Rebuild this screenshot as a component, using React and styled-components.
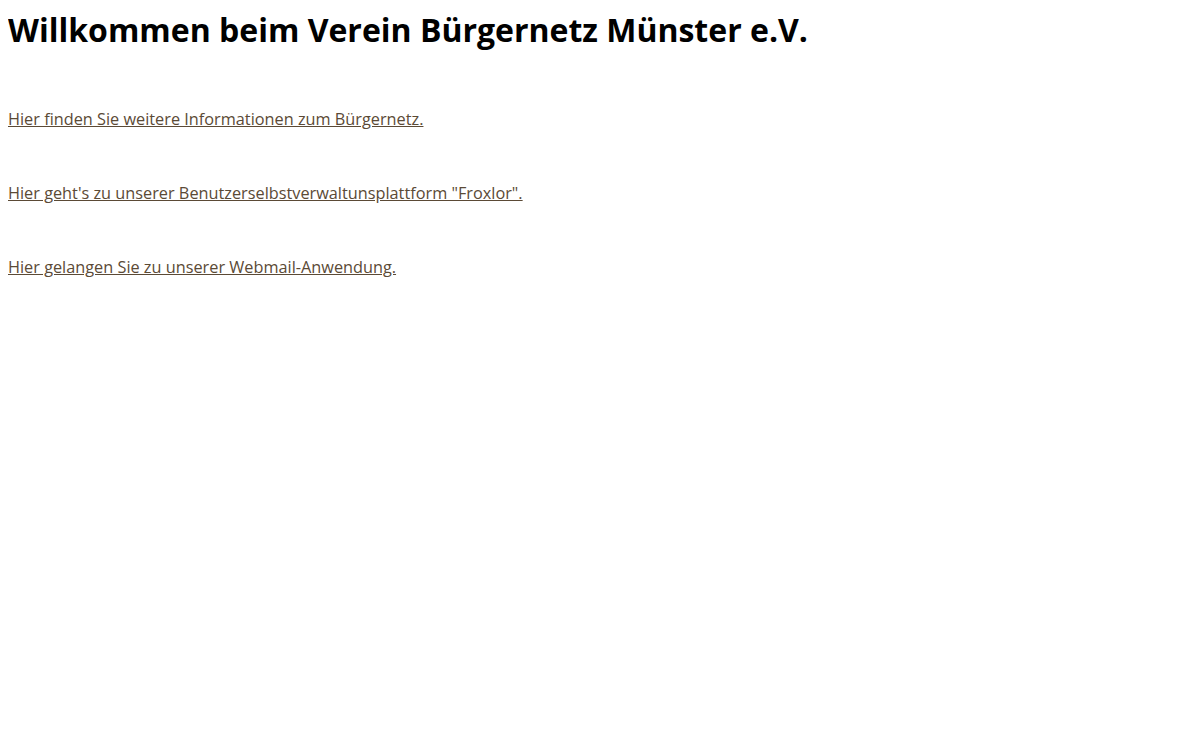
import styled, { createGlobalStyle } from 'styled-components';

const GlobalStyle = createGlobalStyle`
  body {
    margin: 8px;
    background: #fff;
    font-family: "Open Sans", "Noto Sans", sans-serif;
  }
`;

const links = [
  { href: '#info', text: 'Hier finden Sie weitere Informationen zum Bürgernetz.' },
  { href: '#froxlor', text: 'Hier geht\'s zu unserer Benutzerselbstverwaltunsplattform "Froxlor".' },
  { href: '#webmail', text: 'Hier gelangen Sie zu unserer Webmail-Anwendung.' },
];

const App = () => {
  return (
    <>
      <GlobalStyle />
      <Page>
        <Title>Willkommen beim Verein Bürgernetz Münster e.V.</Title>
        <LinkList>
          {links.map((l) => (
            <Entry key={l.href}>
              <EntryLink href={l.href}>{l.text}</EntryLink>
            </Entry>
          ))}
        </LinkList>
      </Page>
    </>
  );
};

export default App;

const Page = styled.main`
  display: flex;
  flex-direction: column;
`;

const Title = styled.h1`
  margin: 0;
  font-size: 32px;
  line-height: 44px;
  font-weight: 700;
  color: #000;
`;

const LinkList = styled.div`
  display: flex;
  flex-direction: column;
  gap: 52px;
  margin-top: 56px;
`;

const Entry = styled.p`
  margin: 0;
  font-size: 16.3px;
  line-height: 22px;
`;

const EntryLink = styled.a`
  color: #5b4a36;
  text-decoration: underline;
`;
